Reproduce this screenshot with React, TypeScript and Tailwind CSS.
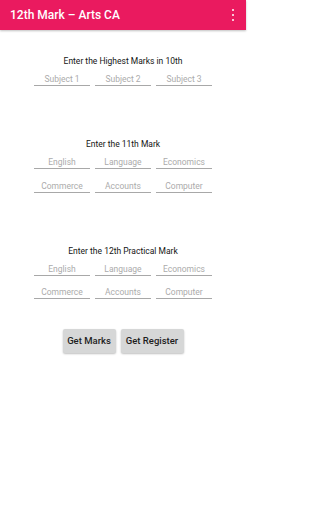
import React from "react";

function Field({ label }: { label: string }) {
  return (
    <div className="h-[19px] border-b border-[#a8a8a8] flex items-start justify-center pt-[8px] text-[8.5px] leading-[9px] text-[#ababab]">
      {label}
    </div>
  );
}

function Section({ title, rows }: { title: string; rows: string[][] }) {
  return (
    <div className="flex flex-col items-center">
      <div className="h-[12px] leading-[12px] text-[8.5px] text-[#151515]">{title}</div>
      <div className="w-[178px] flex flex-col gap-[4.5px]">
        {rows.map((r, i) => (
          <div key={i} className="grid grid-cols-3 gap-[5px]">
            {r.map((l) => (
              <Field key={l} label={l} />
            ))}
          </div>
        ))}
      </div>
    </div>
  );
}

export default function App() {
  return (
    <div className="w-[246px] h-[512px] bg-white flex flex-col" style={{ fontFamily: "Roboto, 'Noto Sans', sans-serif" }}>
      <div className="h-[30px] bg-[#ea1a5f] flex items-center justify-between pl-[10px] pr-[12px] shadow-[0_1px_2px_rgba(0,0,0,0.25)]">
        <span className="text-white text-[12px] font-medium">12th Mark – Arts CA</span>
        <div className="flex flex-col gap-[2.5px] items-center">
          <span className="block w-[2.5px] h-[2.5px] rounded-full bg-white" />
          <span className="block w-[2.5px] h-[2.5px] rounded-full bg-white" />
          <span className="block w-[2.5px] h-[2.5px] rounded-full bg-white" />
        </div>
      </div>
      <div className="pt-[25px] flex flex-col gap-[52px]">
        <Section title="Enter the Highest Marks in 10th" rows={[["Subject 1", "Subject 2", "Subject 3"]]} />
        <Section
          title="Enter the 11th Mark"
          rows={[
            ["English", "Language", "Economics"],
            ["Commerce", "Accounts", "Computer"],
          ]}
        />
        <Section
          title="Enter the 12th Practical Mark"
          rows={[
            ["English", "Language", "Economics"],
            ["Commerce", "Accounts", "Computer"],
          ]}
        />
      </div>
      <div className="mt-[30px] flex justify-center gap-[5px]">
        <button className="w-[53px] h-[24px] rounded-[2px] bg-[#d6d7d7] text-[9.5px] font-medium text-[#1e1e1e] shadow-[0_1px_2px_rgba(0,0,0,0.25)]">
          Get Marks
        </button>
        <button className="w-[63px] h-[24px] rounded-[2px] bg-[#d6d7d7] text-[9.5px] font-medium text-[#1e1e1e] shadow-[0_1px_2px_rgba(0,0,0,0.25)]">
          Get Register
        </button>
      </div>
    </div>
  );
}
